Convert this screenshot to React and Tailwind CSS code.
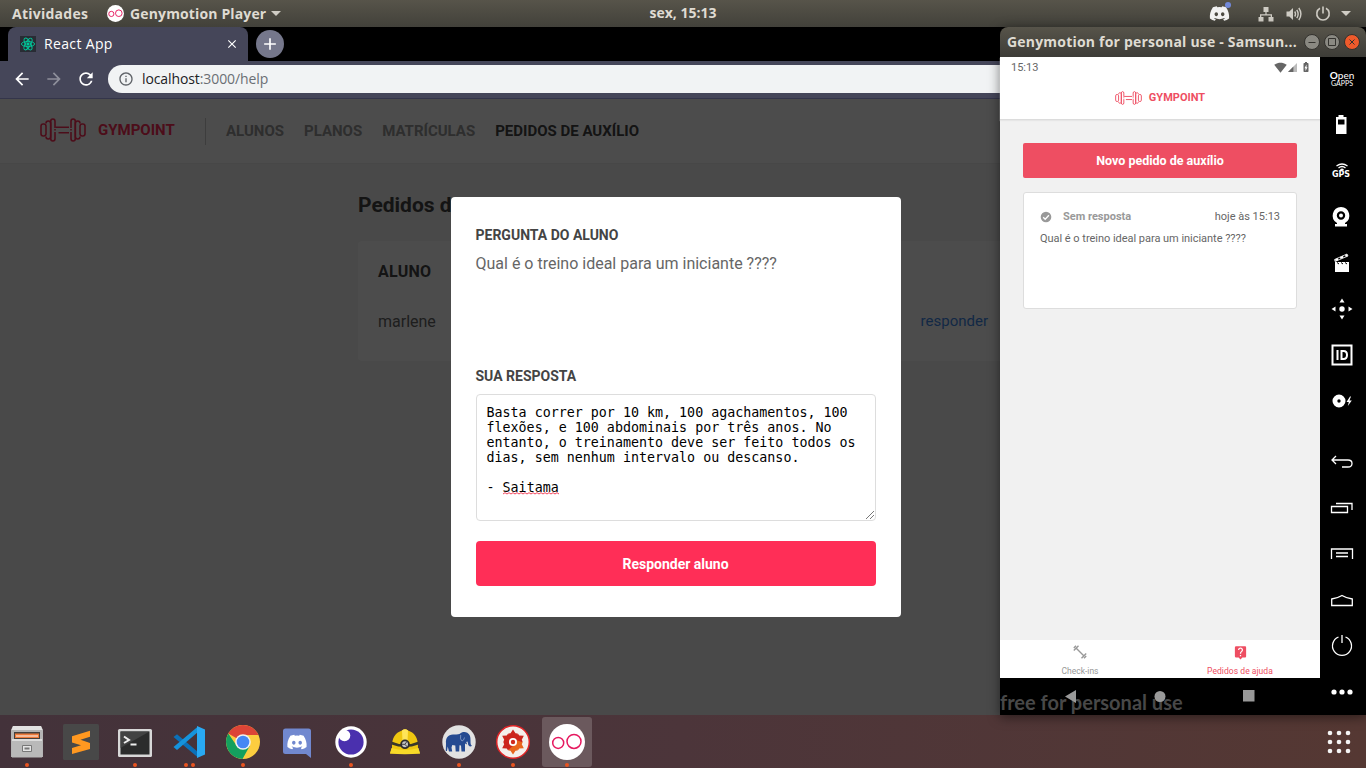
import React from "react";
import { FaDiscord } from "react-icons/fa";
import {
  MdAdd, MdArrowBack, MdArrowForward, MdBatteryChargingFull, MdClose, MdInfoOutline,
  MdLiveHelp, MdRefresh, MdSignalWifi4Bar,
} from "react-icons/md";

const ubuntu = "font-['Open_Sans','Noto_Sans',sans-serif]";

function Dumbbell({ className }) {
  return (
    <svg viewBox="0 0 46 24" className={className} fill="none" stroke="currentColor" strokeWidth="1.6">
      <rect x="1" y="6" width="5" height="12" rx="2.2" />
      <path d="M6 5.5C6 3.8 7 3 8.300 3S10.700 3.800 10.700 5.500V18.500C10.700 20.200 9.600 21 8.300 21S6 20.200 6 18.500" />
      <path d="M15 10V3.500C15 2 14.200 1 12.900 1S10.700 2 10.700 3.500V20.500C10.700 22 11.600 23 12.900 23S15 22 15 20.500V14M15 11v1.500" />
      <path d="M15.500 9.300H29M18.500 14.700H29" />
      <rect x="40" y="6" width="5" height="12" rx="2.200" />
      <path d="M40 5.500C40 3.800 39 3 37.700 3S35.300 3.800 35.300 5.500V18.500C35.300 20.200 36.400 21 37.700 21S40 20.200 40 18.500" />
      <path d="M31 10V3.500C31 2 31.800 1 33.100 1S35.300 2 35.300 3.500V20.500C35.300 22 34.400 23 33.100 23S31 22 31 20.500V14M31 11v1.500" />
    </svg>
  );
}

function GenyLogo({ className, stroke = 1.5 }) {
  return (
    <svg viewBox="0 0 36 36" className={className}>
      <circle cx="18" cy="18" r="18" fill="#fff" />
      <g fill="none" stroke="#e6195f" strokeWidth={stroke}>
        <circle cx="9.200" cy="18.900" r="5.500" />
        <circle cx="25" cy="17.400" r="7" />
      </g>
    </svg>
  );
}

function SystemBar() {
  return (
    <div className={`flex h-[27px] shrink-0 items-center bg-linear-to-b from-[#57544a] to-[#42413a] text-[14px] font-bold text-[#dfdbd2] ${ubuntu}`}>
      <div className="flex w-[500px] items-center pl-[12px]">
        <span className="w-[95px] tracking-[0.25px]">Atividades</span>
        <GenyLogo className="h-[17px] w-[17px]" stroke={2} />
        <span className="ml-[6px] w-[137px] whitespace-nowrap tracking-[0.14px]">Genymotion Player</span>
        <svg viewBox="0 0 10 5" className="ml-1 h-[5px] w-[10px]" fill="#cfccc4"><path d="M0 0h10L5 5z" /></svg>
      </div>
      <span className="-mt-[2px] w-[366px] text-center">sex, 15:13</span>
      <div className="flex flex-1 items-center justify-end pr-[15px]">
        <div className="relative mr-[28px] flex">
          <FaDiscord className="h-[21px] w-[21px] text-[#f2f2f2]" />
          <span className="absolute -top-px right-[-1px] h-[6px] w-[6px] rounded-full bg-[#7289da]" />
        </div>
        <svg viewBox="0 0 16 16" className="mr-[12px] h-4 w-4" fill="#cfccc4">
          <path d="M5.500 1h5v5H8.600v2.200H14V11h1.500v4.500h-5V11h2.200V9.500H3.300V11h2.200v4.500h-5V11H2V8.200h5.400V6H5.500z" />
        </svg>
        <svg viewBox="0 0 16 16" className="mr-[13px] h-4 w-4" fill="none" stroke="#cfccc4" strokeWidth="1.400">
          <path d="M.5 5.500h2.800L7 2v12L3.300 10.500H.5z" fill="#cfccc4" stroke="none" />
          <path d="M8.700 5.500Q10.300 8 8.700 10.500M10.800 3.800Q13.500 8 10.800 12.200M12.800 2Q17 8 12.800 14" />
        </svg>
        <svg viewBox="0 0 16 16" className="mr-[10px] h-4 w-4" fill="none" stroke="#cfccc4" strokeWidth="1.600">
          <path d="M5 2.300a6.200 6.200 0 1 0 6 0M8 .5v7" />
        </svg>
        <svg viewBox="0 0 10 5" className="h-[5px] w-[10px]" fill="#cfccc4"><path d="M0 0h10L5 5z" /></svg>
      </div>
    </div>
  );
}

function BrowserChrome() {
  return (
    <>
      <div className="flex h-[34px] shrink-0 bg-black pl-[8px]">
        <div className={`flex w-[240px] items-center rounded-t-[8px] bg-[#454659] pl-[12px] pr-[9px] text-white ${ubuntu}`}>
          <svg viewBox="0 0 16 16" className="h-4 w-4 bg-[#282c34]" fill="none" stroke="#00c99b" strokeWidth=".9">
            <ellipse cx="8" cy="8" rx="6.600" ry="2.600" />
            <ellipse cx="8" cy="8" rx="6.600" ry="2.600" transform="rotate(60 8 8)" />
            <ellipse cx="8" cy="8" rx="6.600" ry="2.600" transform="rotate(120 8 8)" />
            <circle cx="8" cy="8" r="1.200" fill="#00c99b" />
          </svg>
          <span className="-mt-[2px] ml-2 flex-1 text-[14px] tracking-[0.35px]">React App</span>
          <MdClose className="h-[14px] w-[14px]" />
        </div>
        <div className="ml-[8px] mt-[3px] flex h-[28px] w-[28px] items-center justify-center rounded-full bg-[#75778b]">
          <MdAdd className="h-[20px] w-[20px] text-white" />
        </div>
      </div>
      <div className="flex h-[38px] shrink-0 items-center border-b border-[#34354a] bg-[#454659] pb-px pl-[12px] text-white">
        <MdArrowBack className="h-5 w-5" />
        <MdArrowForward className="ml-[12px] h-5 w-5 text-[#8e8f9b]" />
        <MdRefresh className="ml-[12px] h-5 w-5" />
        <div className={`ml-[12px] flex h-[28px] flex-1 items-center rounded-l-full bg-[#f1f3f4] pl-[10px] text-[14px] text-[#202124] ${ubuntu}`}>
          <MdInfoOutline className="h-4 w-4 text-[#5f6368]" />
          <span className="-mt-px ml-2 tracking-[-0.1px]">localhost<span className="text-[#6b6f74]">:3000/help</span></span>
        </div>
      </div>
    </>
  );
}

function GymPage() {
  return (
    <div className="relative flex-1 overflow-hidden bg-[#f3f3f3] font-[Roboto,sans-serif]">
      <header className="flex h-[65px] items-center border-b border-[#eee] bg-white pt-px pl-[40px] text-[15px] font-bold text-[#999]">
        <Dumbbell className="-mt-[3px] h-[24px] w-[46px] text-[#ff2e57]" />
        <span className="-mt-[2px] ml-[12px] w-[76px] text-[#ff2e57]">GYMPOINT</span>
        <div className="ml-[31px] mr-[20px] h-[27px] border-l border-[#ccc]" />
        <nav className="flex gap-[20px] whitespace-nowrap">
          <span>ALUNOS</span><span>PLANOS</span><span>MATRÍCULAS</span>
          <span className="text-[#444]">PEDIDOS DE AUXÍLIO</span>
        </nav>
      </header>
      <main className="ml-[358px] w-[650px] pt-[27px] text-[#444]">
        <h1 className="h-[50px] text-[21px] leading-[28px] font-bold">Pedidos de auxílio</h1>
        <div className="h-[120px] rounded-[4px] bg-white px-[20px] pt-[21px]">
          <div className="text-[16px] leading-5 font-bold tracking-[0.25px]">ALUNO</div>
          <div className="mt-[30px] flex justify-between text-[16px] leading-5 text-[#666]">
            <span>marlene</span><span className="-mt-px text-[15px] text-[#3f88e8]">responder</span>
          </div>
        </div>
      </main>
      <div className="absolute inset-0 bg-black/70 pl-[451px] pt-[98px]">
        <div className="flex h-[420px] w-[450px] flex-col rounded-[4px] bg-white px-[25px] pt-[28px]">
          <span className="-ml-[0.5px] text-[14px] leading-5 font-bold text-[#444]">PERGUNTA DO ALUNO</span>
          <p className="-ml-[0.5px] mt-[9px] h-[112px] text-[16px] leading-5 text-[#666]">Qual é o treino ideal para um iniciante ????</p>
          <span className="-ml-[0.5px] text-[14px] leading-5 font-bold text-[#444]">SUA RESPOSTA</span>
          <div className="relative mt-[8px] h-[127px] rounded-[4px] border border-[#ddd] pt-[10px] pl-[9.5px] font-['DejaVu_Sans_Mono',monospace] text-[13.333px] leading-[15px] whitespace-pre text-black">
            <div className="h-[75px]">{"Basta correr por 10 km, 100 agachamentos, 100\nflexões, e 100 abdominais por três anos. No\nentanto, o treinamento deve ser feito todos os\ndias, sem nenhum intervalo ou descanso."}</div>
            <div className="flex">
              <span>{"- "}</span>
              <span className="relative">
                Saitama
                <svg viewBox="0 0 56 3" className="absolute top-[12px] left-0 h-[3px] w-[56px]" fill="none" stroke="#f0304a" strokeWidth=".9">
                  <path d="M0 2l2-1.300L4 2l2-1.300L8 2l2-1.300L12 2l2-1.300L16 2l2-1.300L20 2l2-1.300L24 2l2-1.300L28 2l2-1.300L32 2l2-1.300L36 2l2-1.300L40 2l2-1.300L44 2l2-1.300L48 2l2-1.300L52 2l2-1.300L56 2" />
                </svg>
              </span>
            </div>
            <svg viewBox="0 0 8 8" className="absolute right-[1px] bottom-[1px] h-2 w-2" stroke="#555" strokeWidth=".8"><path d="M0 8L8 0M4 8L8 4" /></svg>
          </div>
          <button className="mt-5 h-[45px] rounded-[4px] bg-[#ff2e57] pt-[2px] pr-px text-[14px] font-bold text-white">Responder aluno</button>
        </div>
      </div>
    </div>
  );
}

function WindowButton({ className, children }) {
  return (
    <span className={`flex h-4 w-4 items-center justify-center rounded-full border border-[#33322e] ${className}`}>
      <svg viewBox="0 0 8 8" className="h-2 w-2" fill="none" stroke="#34332f">{children}</svg>
    </span>
  );
}

function SideTools() {
  const slot = "flex h-[46px] items-center justify-center";
  const icon = "h-[24px] w-[24px]";
  const line = { viewBox: "0 0 24 24", className: icon, fill: "none", stroke: "#fff", strokeWidth: 1.3 };
  const solid = { viewBox: "0 0 24 24", className: icon, fill: "#fff" };
  return (
    <div className="w-[46px] bg-black pr-[2px] text-white">
      <div className="flex h-[45px] flex-col items-center pt-[14px] font-[Lato,sans-serif]">
        <span className="text-[10px] leading-[9px]"><b>O</b>pen</span>
        <span className="text-[7px] leading-[7px]">GAPPS</span>
      </div>
      <div className={slot}><svg {...solid}><path fillRule="evenodd" d="M8.500 2h5v2h3v17H6V4h2.500zM8 6.500v5h6.500v-5z" /></svg></div>
      <div className={`${slot} flex-col`}>
        <svg viewBox="0 0 12 8" className="h-[8px] w-[12px]" fill="none" stroke="#fff" strokeWidth="1.300"><path d="M.5 3Q6-1 11.500 3M2.500 5Q6 2 9.500 5M4.500 7Q6 5.500 7.500 7" /></svg>
        <span className="mr-[2px] font-['DejaVu_Sans',sans-serif] text-[8px] leading-[8px] font-bold">GPS</span>
      </div>
      <div className={slot}><svg {...solid}><path fillRule="evenodd" d="M11 2a8.500 8.500 0 0 1 4 15.900V19h2v2.500H5V19h2v-1.100A8.500 8.500 0 0 1 11 2zm0 4.300a4.200 4.200 0 1 0 0 8.400 4.200 4.200 0 0 0 0-8.400z" /><circle cx="11" cy="10.500" r="2" /></svg></div>
      <div className={slot}><svg {...solid}><path d="M5 11h14v10H5z" /><path d="M4.500 8.500L17 3l1 2L5 10.500z" fill="none" stroke="#fff" strokeWidth=".8" /><path d="M5 8.300l3-1.300.5 2-3 1.400zM10 6l3-1.300.5 2-3 1.400zM15 4l2-1 .8 2-2 1z" /><path d="M7 11.500l2 1.500M11 11.500l2 1.500M15 11.500l2 1.500" stroke="#000" /></svg></div>
      <div className={slot}><svg {...solid}><circle cx="12" cy="12" r="2.700" /><path d="M12 1.500l2.500 4h-5zM12 22.500l2.500-4h-5zM1.500 12l4-2.500v5zM22.500 12l-4-2.500v5z" /></svg></div>
      <div className={slot}><svg {...line} strokeWidth="2"><path d="M2.500 2.500h19v19h-19zM7.500 7v10M11.500 8v8h2q3.500 0 3.500-4t-3.500-4z" /></svg></div>
      <div className={slot}><svg {...solid}><path fillRule="evenodd" d="M9 5.500a6.500 6.500 0 1 1 0 13 6.500 6.500 0 0 1 0-13zm0 4.800a1.700 1.700 0 1 0 0 3.400 1.700 1.700 0 0 0 0-3.400zM20 7.500L16.500 13h2.300l-1 4 4-5.500h-2.400l1.600-4z" /></svg></div>
      <div className={`${slot} mt-[15px]`}><svg {...line}><path d="M6 6L2 10l4 4M2 10h16q4 0 4 3.500T18 17h-6" /></svg></div>
      <div className={slot}><svg {...line}><path d="M1.500 10.500h16v6h-16zM6 7.500h16V14" /></svg></div>
      <div className={slot}><svg {...line}><path d="M1.500 17V7h21v10M6 11h12M6 14.500h12" /></svg></div>
      <div className={slot}><svg {...line}><path d="M1.700 17.500V11Q8 10 12 7.500q4 2.500 10.300 3.500v6.500z" /></svg></div>
      <div className={slot}><svg {...line}><path d="M8.500 3a9.500 9.500 0 1 0 7 0M12 1v8" /></svg></div>
      <div className={slot}><svg {...solid}><circle cx="4" cy="12" r="2.600" /><circle cx="12" cy="12" r="2.600" /><circle cx="20" cy="12" r="2.600" /></svg></div>
    </div>
  );
}

function PhoneWindow() {
  return (
    <div className="absolute top-0 left-[1000px] flex h-[688px] w-[366px] flex-col rounded-t-[8px] bg-black shadow-[0_2px_12px_rgba(0,0,0,0.5)]">
      <div className={`flex h-[30px] shrink-0 items-center rounded-t-[8px] bg-linear-to-b from-[#57544a] to-[#3d3c37] pl-[7px] text-[14px] font-bold text-[#dfdbd2] ${ubuntu}`}>
        <span className="-mt-[2px] w-[297px] whitespace-nowrap tracking-[0.2px]">Genymotion for personal use - Samsun...</span>
        <div className="flex gap-[4px]">
          <WindowButton className="bg-[#8a8982]"><path d="M.5 4.500h7" /></WindowButton>
          <WindowButton className="bg-[#8a8982]"><path d="M.5.5h7v7h-7z" /></WindowButton>
          <WindowButton className="bg-[#ee5a2b]"><path d="M1.500 1.500l5 5M6.500 1.500l-5 5" /></WindowButton>
        </div>
      </div>
      <div className="flex flex-1">
        <div className="flex w-[320px] flex-col bg-[#f1f1f1] font-[Roboto,sans-serif]">
          <div className="flex h-[63px] flex-col border-b border-[#dcdcdc] bg-white shadow-[0_1px_1px_#e6e6e6]">
            <div className="flex h-[21px] items-center pr-[8px] pl-[11px] text-[11px] text-[#666]">
              <span className="flex-1 pt-px">15:13</span>
              <MdSignalWifi4Bar className="-mt-px h-[13px] w-[13px]" />
              <svg viewBox="0 0 10 10" className="ml-px h-[9px] w-[9px]"><path d="M10 0v10H0z" fill="#bbb" /><path d="M6 4v6H0z" fill="#666" /></svg>
              <MdBatteryChargingFull className="-mt-px ml-[3px] h-[12px] w-[12px]" />
            </div>
            <div className="flex h-[41px] items-center justify-center text-[11px] font-bold text-[#ee4e62]">
              <Dumbbell className="-mt-px h-[14px] w-[27px]" />
              <span className="ml-[7px]">GYMPOINT</span>
            </div>
          </div>
          <div className="flex-1 px-[23px] pt-[23px]">
            <div className="flex h-[35px] items-center justify-center rounded-[2px] bg-[#ee4e62] pt-[2px] text-[12.500px] font-bold text-white">Novo pedido de auxílio</div>
            <div className="mt-[14px] h-[117px] rounded-[3px] border border-[#ddd] bg-white px-[16px] pt-[17px] text-[11px] text-[#666]">
              <div className="flex h-[14px] items-center">
                <svg viewBox="0 0 12 12" className="-mt-px h-[12px] w-[12px]"><circle cx="6" cy="6" r="5.300" fill="#999" /><path d="M3.200 6.200l2 2 3.700-3.900" fill="none" stroke="#fff" strokeWidth="1.300" /></svg>
                <span className="ml-[11px] flex-1 font-bold text-[#999]">Sem resposta</span>
                <span>hoje às 15:13</span>
              </div>
              <p className="mt-[7px] leading-[15px] tracking-[-0.03px]">Qual é o treino ideal para um iniciante ????</p>
            </div>
          </div>
          <div className="flex h-[38px] bg-white text-[8.500px] leading-[10px]">
            <div className="flex flex-1 flex-col items-center pt-[5px] text-[#999]">
              <svg viewBox="0 0 14 14" className="h-[14px] w-[14px]" fill="none" stroke="currentColor" strokeWidth="1.400"><path d="M3 3l8 8M.8 5.500L5.500.8M.8 3L3 .8M8.500 13.200l4.700-4.700M11 13.200l2.200-2.200" /></svg>
              <span className="mt-[7px]">Check-ins</span>
            </div>
            <div className="flex flex-1 flex-col items-center pt-[5px] text-[#ee4e62]">
              <MdLiveHelp className="h-[15px] w-[15px]" />
              <span className="mt-[6px] tracking-[0.05px]">Pedidos de ajuda</span>
            </div>
          </div>
          <div className="relative h-[37px] overflow-hidden bg-black">
            <span className="absolute top-[12px] left-0 font-[Lato,sans-serif] text-[20px] leading-6 font-bold whitespace-nowrap text-[#484848]">free for personal use</span>
            <svg viewBox="0 0 320 37" className="absolute inset-0 h-[37px] w-[320px]" fill="#999"><path d="M76 12v13l-11-6.500zM243 12h11.500v11.500H243z" /><circle cx="160" cy="18.500" r="5.500" /></svg>
          </div>
        </div>
        <SideTools />
      </div>
    </div>
  );
}

const petals = [0, 60, 120, 180, 240, 300];

const dockIcons = [
  { name: "files", dots: 1, art: <><path d="M4 2h28l2 4v27H2V6z" fill="#b4b4b4" /><path d="M4 2h28l1.500 4h-31z" fill="#e2e2e2" /><path d="M5 8h26v7H5z" fill="#45403d" /><path d="M6 9.500h24V14H6z" fill="#ee7a3a" /><path d="M7 11.500h22v1H7z" fill="#fff" /><path d="M3 15h30v18.500H3z" fill="#b9b9b9" /><path d="M3 15h30v2H3z" fill="#dcdcdc" /><path d="M13.500 21.500h9v6h-9z" fill="#e4e4e4" stroke="#777" /><path d="M15.500 23.500h5v2h-5z" fill="#777" /></> },
  { name: "sublime", dots: 0, art: <><rect width="36" height="36" rx="1.500" fill="#484848" /><path d="M9 12.300l18-5.500v6l-9.500 3L27 19v6L9 30v-6l9-2.800L9 18.500z" fill="#ff9820" /></> },
  { name: "terminal", dots: 1, art: <><rect x="1" y="5" width="34" height="28" rx="1.500" fill="#d8d8d8" /><path d="M3.500 7.500h29v23h-29z" fill="#2b2c2c" /><path d="M3.500 7.500h29L3.500 24z" fill="#424343" /><path d="M7 12.500l5 3.500-5 3M13.500 20.500h6" fill="none" stroke="#eee" strokeWidth="2" /></> },
  { name: "vscode", dots: 2, art: <><path d="M2.500 13L6 10.200 27 28v5.500z" fill="#0b70b8" /><path d="M2.500 23L6 26 27 8V2.500z" fill="#1593dc" /><path d="M26 2l8 3.500v25L26 34z" fill="#29a9f3" /></> },
  { name: "chrome", dots: 1, art: <><circle cx="18" cy="18" r="17" fill="#fccd3f" /><path d="M18 18L3.300 9.500A17 17 0 0 1 32.700 9.500L33.300 11H18z" fill="#dc4437" /><path d="M3.300 9.500A17 17 0 0 0 17.500 35L25 21.500 11.500 21.500z" fill="#14a05e" /><circle cx="18" cy="18" r="7.800" fill="#f1f1f1" /><circle cx="18" cy="18" r="6.300" fill="#4587f4" /></> },
  { name: "discord", dots: 0, art: <><path d="M6.500 4.500h23q2.500 0 2.500 2.500v27l-5-4H6.500Q4 30 4 27.500V7q0-2.500 2.500-2.500z" fill="#7188cf" /><g transform="translate(7.500 7.500)"><FaDiscord size={21} color="#fff" /></g></> },
  { name: "insomnia", dots: 1, art: <><circle cx="18" cy="18" r="15.700" fill="#fff" /><circle cx="18" cy="18" r="12.600" fill="#4a30ae" /><circle cx="11.500" cy="11.500" r="5.800" fill="#fff" /></> },
  { name: "helmet", dots: 0, art: <><path d="M5 24C4.500 13 9 8.500 15 6.500q3-2.500 6 0C27 8.500 31.500 13 31 24l2 5.500H3z" fill="#efc610" /><path d="M15 6.500q3-2.500 6 0L20.500 18h-5z" fill="#ffe559" /><path d="M4.500 17.500q13.500 6 27 0v3q-13.500 5-27 0z" fill="#39372a" /><path d="M4.500 24q13.500 4 27 0l1.500 5.500q-15 1.500-30 0z" fill="#f7da28" /><circle cx="18" cy="20.300" r="4.800" fill="#2c2c2c" /><circle cx="18" cy="20.300" r="3" fill="#c4c4c4" /><path d="M18 20.300l2-3M18 20.300l-3 0M18 20.300l2 2.500" stroke="#444" /></> },
  { name: "elephant", dots: 1, art: <><circle cx="18" cy="18" r="16.700" fill="#e2e2e2" /><path d="M5 19.500C4.500 14 7 10.800 12 10.500c3-.2 5 .3 7-.7 1.500-2 5-2.500 7.300-1 2.700 1.600 3.200 4.200 3.200 7.400 0 3 0 4.800 1.500 5.600-1.800 1.500-4 .2-4-2.200l-.5-2.100-1.300.5 1 2.500-2.200-1V27.500h-3.500L20 21.500l-1.500-.3-.3 6.300h-3.500L14.300 21.500l-3-.5-.8 2.500.7 4H8l-1.300-5L6 27H4.800z" fill="#254a91" /><path d="M19.700 11q-1 4.500 1.300 6 2-.5 2.500-3.500" fill="none" stroke="#9fb1d6" strokeWidth=".7" /></> },
  { name: "flower", dots: 1, art: <><circle cx="18" cy="18" r="16.300" fill="#f4efeb" stroke="#df2527" strokeWidth="1.500" /><g>{petals.map((a) => <path key={a} d="M15 18L13.300 9.500 15.500 9.300 18 5.500l2.500 3.800 2.200.2L21 18z" transform={`rotate(${a} 18 18)`} fill={a > 60 && a < 240 ? "#e8651d" : "#cc251d"} />)}</g><circle cx="18" cy="18" r="4" fill="#fff" /><circle cx="18" cy="18" r="2.200" fill="#d12a20" /></> },
];

function Dock() {
  return (
    <div className="flex h-[53px] shrink-0 bg-linear-to-r from-[#43323a] via-[#4c353a] to-[#553833]">
      {dockIcons.map((item) => (
        <div key={item.name} className="relative flex w-[54px] justify-center pt-[9px]">
          <svg viewBox="0 0 36 36" className="h-[36px] w-[36px]">{item.art}</svg>
          <div className="absolute right-0 bottom-[1px] left-0 flex justify-center gap-[3px]">
            {Array.from({ length: item.dots }, (_, i) => <span key={i} className="h-1 w-1 rounded-full bg-[#e95420]" />)}
          </div>
        </div>
      ))}
      <div className="relative mt-[2px] ml-[2px] flex h-[50px] w-[50px] justify-center rounded-[3px] bg-[#6b595d] pt-[7px]">
        <GenyLogo className="h-[36px] w-[36px]" />
        <span className="absolute bottom-0 h-1 w-1 rounded-full bg-[#e95420]" />
      </div>
      <div className="flex flex-1 items-center justify-end pr-[15px]">
        <svg viewBox="0 0 24 24" className="h-6 w-6" fill="#f5f5f5">
          {[3, 12, 21].map((y) => [3, 12, 21].map((x) => <circle key={`${x}-${y}`} cx={x} cy={y} r="2.300" />))}
        </svg>
      </div>
    </div>
  );
}

export default function App() {
  return (
    <div className="flex h-[768px] w-[1366px] flex-col overflow-hidden bg-black">
      <SystemBar />
      <div className="relative flex h-[688px] shrink-0 flex-col">
        <BrowserChrome />
        <GymPage />
        <PhoneWindow />
      </div>
      <Dock />
    </div>
  );
}
